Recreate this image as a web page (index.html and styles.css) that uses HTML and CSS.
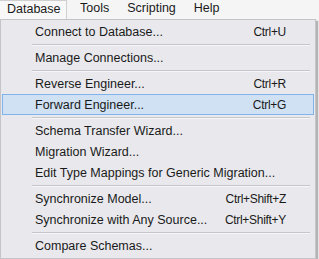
FILE: index.html
```html
<!DOCTYPE html>
<html>
<head>
<meta charset="utf-8">
<link rel="stylesheet" href="styles.css">
</head>
<body>
<div class="menubar">
  <div class="mb-item active">Database</div>
  <div class="mb-item">Tools</div>
  <div class="mb-item">Scripting</div>
  <div class="mb-item">Help</div>
</div>
<div class="menu">
  <div class="row"><span class="label">Connect to Database...</span><span class="key">Ctrl+U</span></div>
  <div class="sep"></div>
  <div class="row"><span class="label">Manage Connections...</span></div>
  <div class="sep"></div>
  <div class="row"><span class="label">Reverse Engineer...</span><span class="key">Ctrl+R</span></div>
  <div class="row hl"><span class="label">Forward Engineer...</span><span class="key">Ctrl+G</span></div>
  <div class="sep"></div>
  <div class="row"><span class="label">Schema Transfer Wizard...</span></div>
  <div class="row"><span class="label">Migration Wizard...</span></div>
  <div class="row"><span class="label">Edit Type Mappings for Generic Migration...</span></div>
  <div class="sep"></div>
  <div class="row"><span class="label">Synchronize Model...</span><span class="key">Ctrl+Shift+Z</span></div>
  <div class="row"><span class="label">Synchronize with Any Source...</span><span class="key">Ctrl+Shift+Y</span></div>
  <div class="sep"></div>
  <div class="row"><span class="label">Compare Schemas...</span></div>
</div>
</body>
</html>
```
FILE: styles.css
```css
html, body {
  margin: 0;
  padding: 0;
}
body {
  background: #f0f0f0;
  font-family: "Liberation Sans", Arial, sans-serif;
  font-size: 12.5px;
  color: #1a1a1a;
  width: 319px;
  height: 259px;
  overflow: hidden;
}
.menubar {
  display: flex;
  height: 19px;
  background: #f5f5f5;
}
.mb-item {
  padding: 0 6px;
  line-height: 17px;
  margin-right: 6px;
}
.mb-item.active {
  background: #f8f8f8;
  border: 1px solid #cfcfcf;
  border-bottom: none;
  border-left: none;
  line-height: 17px;
  padding: 0 6px 0 7px;
  width: 53px;
  margin-right: 7px;
}
.menu {
  width: 314px;
  background: #e9e9ed;
  border: 1px solid #c4c4c8;
  padding: 1px 0 2px 0;
  box-shadow: 2px 2px 1px rgba(0,0,0,0.25);
}
.row {
  display: flex;
  align-items: center;
  height: 21px;
  margin: 0 1px;
  padding-left: 32px;
  padding-right: 27px;
  border: 1px solid transparent;
  box-sizing: border-box;
}
.row .label {
  flex: 1;
}
.row .key {
  font-size: 12px;
  letter-spacing: -0.3px;
}
.row.hl {
  background: #cfe1f3;
  border-color: #7fb3ea;
}
.sep {
  height: 5px;
  margin-left: 31px;
  margin-right: 5px;
  display: flex;
  align-items: center;
}
.sep::before {
  content: "";
  flex: 1;
  height: 1px;
  background: #c6c6ca;
  border-bottom: 1px solid #f6f6f8;
}
```
